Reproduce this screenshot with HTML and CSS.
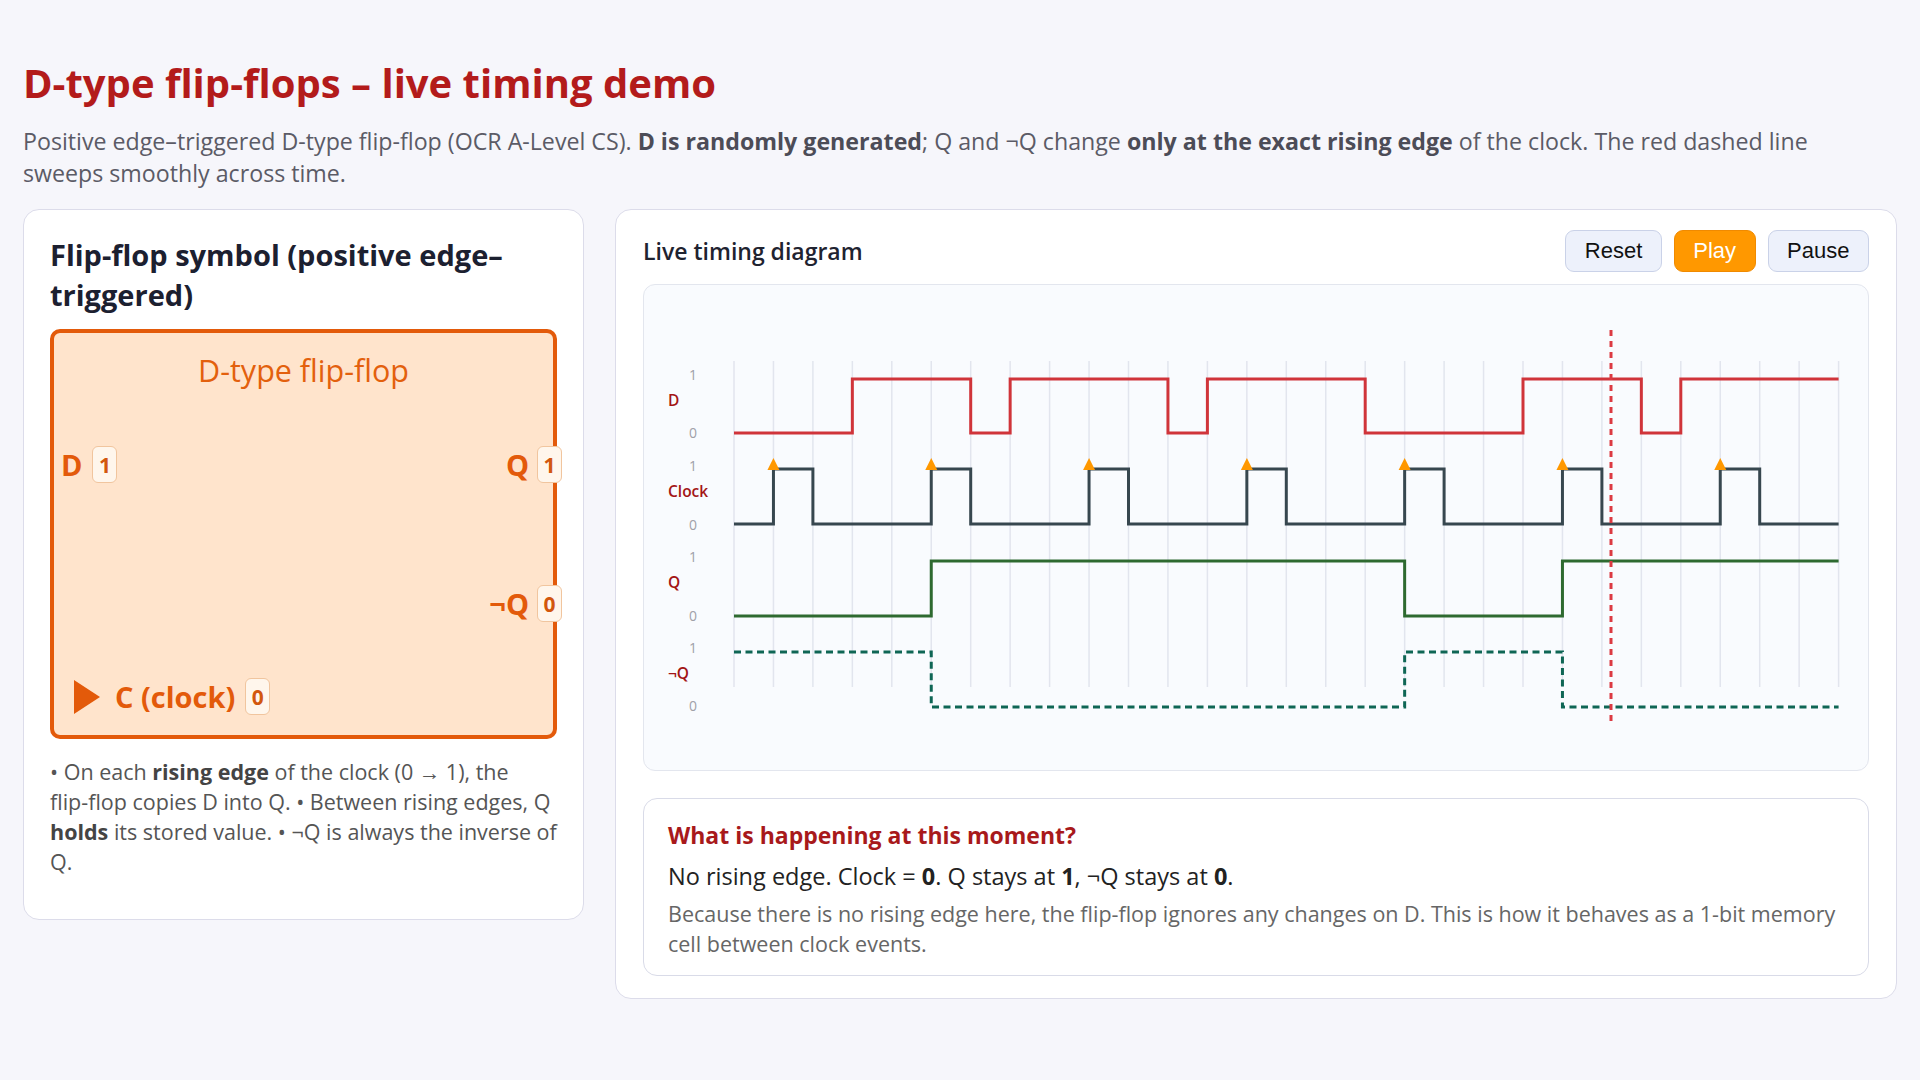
FILE: index.html
```html
<!DOCTYPE html>
<html lang="en">
<head>
<meta charset="utf-8">
<title>D-type flip-flops – live timing demo</title>
<link rel="stylesheet" href="styles.css">
</head>
<body>
<main class="page">
  <h1 class="title">D-type flip-flops – live timing demo</h1>
  <p class="lead">Positive edge–triggered D-type flip-flop (OCR A-Level CS). <b>D is randomly generated</b>; Q and ¬Q change <b>only at the exact rising edge</b> of the clock. The red dashed line sweeps smoothly across time.</p>
  <div class="layout">
    <section class="card card-symbol">
      <h2 class="card-heading">Flip-flop symbol (positive edge–triggered)</h2>
      <div class="ff">
        <div class="ff-title">D-type flip-flop</div>
        <div class="pin pin-d"><span class="pin-name">D</span><span class="pin-val">1</span></div>
        <div class="pin pin-q"><span class="pin-name">Q</span><span class="pin-val">1</span></div>
        <div class="pin pin-nq"><span class="pin-name">¬Q</span><span class="pin-val">0</span></div>
        <div class="pin pin-clk"><span class="clk-tri"></span><span class="pin-name clk-name">C (clock)</span><span class="pin-val">0</span></div>
      </div>
      <p class="notes">• On each <b>rising edge</b> of the clock (0 → 1), the <span class="nowrap">flip-flop</span> copies D into Q. • Between rising edges, Q <b>holds</b> its stored value. • ¬Q is always the inverse of Q.</p>
    </section>
    <section class="card card-timing">
      <div class="timing-head">
        <h2 class="timing-title">Live timing diagram</h2>
        <div class="controls">
          <button class="btn">Reset</button>
          <button class="btn btn-primary">Play</button>
          <button class="btn">Pause</button>
        </div>
      </div>
      <div class="diagram">
        <svg class="wave" viewBox="0 0 1224 485" width="1224" height="485">
          <g class="grid">
            <line x1="90" y1="76" x2="90" y2="402"/>
            <line x1="129.45" y1="76" x2="129.45" y2="402"/>
            <line x1="168.9" y1="76" x2="168.9" y2="402"/>
            <line x1="208.35" y1="76" x2="208.35" y2="402"/>
            <line x1="247.8" y1="76" x2="247.8" y2="402"/>
            <line x1="287.25" y1="76" x2="287.25" y2="402"/>
            <line x1="326.7" y1="76" x2="326.7" y2="402"/>
            <line x1="366.15" y1="76" x2="366.15" y2="402"/>
            <line x1="405.6" y1="76" x2="405.6" y2="402"/>
            <line x1="445.05" y1="76" x2="445.05" y2="402"/>
            <line x1="484.5" y1="76" x2="484.5" y2="402"/>
            <line x1="523.95" y1="76" x2="523.95" y2="402"/>
            <line x1="563.4" y1="76" x2="563.4" y2="402"/>
            <line x1="602.85" y1="76" x2="602.85" y2="402"/>
            <line x1="642.3" y1="76" x2="642.3" y2="402"/>
            <line x1="681.75" y1="76" x2="681.75" y2="402"/>
            <line x1="721.2" y1="76" x2="721.2" y2="402"/>
            <line x1="760.65" y1="76" x2="760.65" y2="402"/>
            <line x1="800.1" y1="76" x2="800.1" y2="402"/>
            <line x1="839.55" y1="76" x2="839.55" y2="402"/>
            <line x1="879" y1="76" x2="879" y2="402"/>
            <line x1="918.45" y1="76" x2="918.45" y2="402"/>
            <line x1="957.9" y1="76" x2="957.9" y2="402"/>
            <line x1="997.35" y1="76" x2="997.35" y2="402"/>
            <line x1="1036.8" y1="76" x2="1036.8" y2="402"/>
            <line x1="1076.25" y1="76" x2="1076.25" y2="402"/>
            <line x1="1115.7" y1="76" x2="1115.7" y2="402"/>
            <line x1="1155.15" y1="76" x2="1155.15" y2="402"/>
            <line x1="1194.6" y1="76" x2="1194.6" y2="402"/>
          </g>
          <g class="labels">
            <text class="sig-val" x="49" y="89">1</text>
            <text class="sig-name" x="24" y="115">D</text>
            <text class="sig-val" x="49" y="147">0</text>
            <text class="sig-val" x="49" y="180">1</text>
            <text class="sig-name" x="24" y="206">Clock</text>
            <text class="sig-val" x="49" y="239">0</text>
            <text class="sig-val" x="49" y="271">1</text>
            <text class="sig-name" x="24" y="297">Q</text>
            <text class="sig-val" x="49" y="330">0</text>
            <text class="sig-val" x="49" y="362">1</text>
            <text class="sig-name" x="24" y="388">¬Q</text>
            <text class="sig-val" x="49" y="420">0</text>
          </g>
          <path class="sig sig-d" d="M90 148 H208.35 V94 H326.7 V148 H366.15 V94 H523.95 V148 H563.4 V94 H721.2 V148 H879 V94 H997.35 V148 H1036.8 V94 H1194.6"/>
          <path class="sig sig-clk" d="M90 239 H129.45 V184 H168.9 V239 H287.25 V184 H326.7 V239 H445.05 V184 H484.5 V239 H602.85 V184 H642.3 V239 H760.65 V184 H800.1 V239 H918.45 V184 H957.9 V239 H1076.25 V184 H1115.7 V239 H1194.6"/>
          <g class="edges">
            <polygon points="123.45,185 129.45,173 135.45,185"/>
            <polygon points="281.25,185 287.25,173 293.25,185"/>
            <polygon points="439.05,185 445.05,173 451.05,185"/>
            <polygon points="596.85,185 602.85,173 608.85,185"/>
            <polygon points="754.65,185 760.65,173 766.65,185"/>
            <polygon points="912.45,185 918.45,173 924.45,185"/>
            <polygon points="1070.25,185 1076.25,173 1082.25,185"/>
          </g>
          <path class="sig sig-q" d="M90 331 H287.25 V276 H760.65 V331 H918.45 V276 H1194.6"/>
          <path class="sig sig-nq" d="M90 367 H287.25 V422 H760.65 V367 H918.45 V422 H1194.6"/>
          <line class="cursor" x1="967" y1="45" x2="967" y2="439"/>
        </svg>
      </div>
      <div class="info">
        <h3 class="info-title">What is happening at this moment?</h3>
        <p class="info-state">No rising edge. Clock = <b>0</b>. Q stays at <b>1</b>, ¬Q stays at <b>0</b>.</p>
        <p class="info-detail">Because there is no rising edge here, the flip-flop ignores any changes on D. This is how it behaves as a 1-bit memory cell between clock events.</p>
      </div>
    </section>
  </div>
</main>
</body>
</html>
```

FILE: styles.css
```css
* { box-sizing: border-box; }

body {
  margin: 0;
  background: #f6f6fb;
  font-family: "Open Sans", "Noto Sans", sans-serif;
  color: #222;
}

.page {
  padding: 59px 23px 40px;
}

.title {
  margin: 0;
  font-size: 40px;
  line-height: 48px;
  font-weight: 700;
  color: #b31b1b;
}

.lead {
  max-width: 1840px;
  margin: 18px 0 20px;
  font-size: 23.2px;
  line-height: 32px;
  color: #5b5b66;
}

.lead b { color: #4c4c57; }

.layout {
  display: grid;
  grid-template-columns: 561px 1fr;
  gap: 31px;
  align-items: start;
}

.card {
  background: #fff;
  border: 1px solid #dcdcea;
  border-radius: 16px;
}

.card-symbol {
  padding: 25px 26px 42px;
}

.card-heading {
  margin: 0 0 14px;
  font-size: 29px;
  line-height: 40px;
  font-weight: 700;
  color: #1c2030;
}

.ff {
  position: relative;
  height: 410px;
  border: 4px solid #e35a0a;
  border-radius: 10px;
  background: #ffe4cc;
}

.ff-title {
  margin-top: 17px;
  text-align: center;
  font-size: 30.5px;
  line-height: 40px;
  color: #e3600d;
}

.pin {
  position: absolute;
  display: flex;
  align-items: center;
  gap: 10px;
  height: 37px;
}

.pin-name {
  font-size: 29px;
  font-weight: 700;
  line-height: 1;
  color: #e35a0a;
}

.pin-val {
  width: 25px;
  height: 37px;
  border: 1px solid #f1c59e;
  border-radius: 6px;
  background: #fff6ec;
  display: flex;
  align-items: center;
  justify-content: center;
  font-size: 21px;
  font-weight: 700;
  color: #d2570e;
}

.pin-d { left: 7px; top: 113px; }
.pin-q { right: -9px; top: 113px; gap: 8px; }
.pin-nq { right: -9px; top: 252px; gap: 8px; }
.pin-clk { left: 20px; top: 345px; gap: 0; }

.clk-tri {
  width: 0;
  height: 0;
  border-top: 17.5px solid transparent;
  border-bottom: 17.5px solid transparent;
  border-left: 26px solid #e35a0a;
  margin-right: 15px;
}

.clk-name { margin-right: 10px; }

.notes {
  margin: 18px 0 0;
  font-size: 21.5px;
  line-height: 30px;
  color: #555;
}

.notes b { color: #444; }

.nowrap { white-space: nowrap; }

.card-timing {
  padding: 20px 27px 22px;
}

.timing-head {
  display: flex;
  align-items: center;
  justify-content: space-between;
  height: 42px;
}

.timing-title {
  margin: 0;
  font-size: 23px;
  font-weight: 600;
  color: #1f2330;
}

.controls {
  display: flex;
  gap: 12px;
}

.btn {
  height: 42px;
  padding: 0 18.5px;
  border: 1px solid #cad2e8;
  border-radius: 9px;
  background: #edf1fb;
  font-family: "Liberation Sans", Arial, sans-serif;
  font-size: 22px;
  color: #111;
}

.btn-primary {
  background: #ff9800;
  border-color: #f08a00;
  color: #fff;
}

.diagram {
  margin-top: 12px;
  height: 487px;
  border: 1px solid #e3e6ee;
  border-radius: 12px;
  background: #f9fbfe;
  overflow: hidden;
}

.wave { display: block; }

.grid line { stroke: #e2e5ee; stroke-width: 1.5; }

.sig { fill: none; stroke-width: 3; stroke-linejoin: miter; }
.sig-d { stroke: #d0343a; }
.sig-clk { stroke: #37474f; }
.sig-q { stroke: #2e6a30; }
.sig-nq { stroke: #0f6655; stroke-dasharray: 7 4.5; }

.edges polygon { fill: #ff9800; }

.cursor { stroke: #dc3a42; stroke-width: 3; stroke-dasharray: 6 5; }

.sig-name {
  font-family: "Open Sans", sans-serif;
  font-size: 15.5px;
  font-weight: 600;
  fill: #a31515;
  dominant-baseline: central;
}

.sig-val {
  font-family: "Open Sans", sans-serif;
  font-size: 14px;
  fill: #a0a0a8;
  text-anchor: middle;
  dominant-baseline: central;
}

.info {
  margin-top: 27px;
  padding: 20px 24px 16px;
  border: 1px solid #d9dbe8;
  border-radius: 14px;
  background: #fff;
}

.info-title {
  margin: 0;
  font-size: 23px;
  line-height: 32px;
  font-weight: 700;
  color: #a8191b;
}

.info-state {
  margin: 10px 0 0;
  font-size: 23.5px;
  line-height: 30px;
  color: #222;
}

.info-detail {
  margin: 8px 0 0;
  font-size: 21.5px;
  line-height: 30px;
  color: #666;
}
```
